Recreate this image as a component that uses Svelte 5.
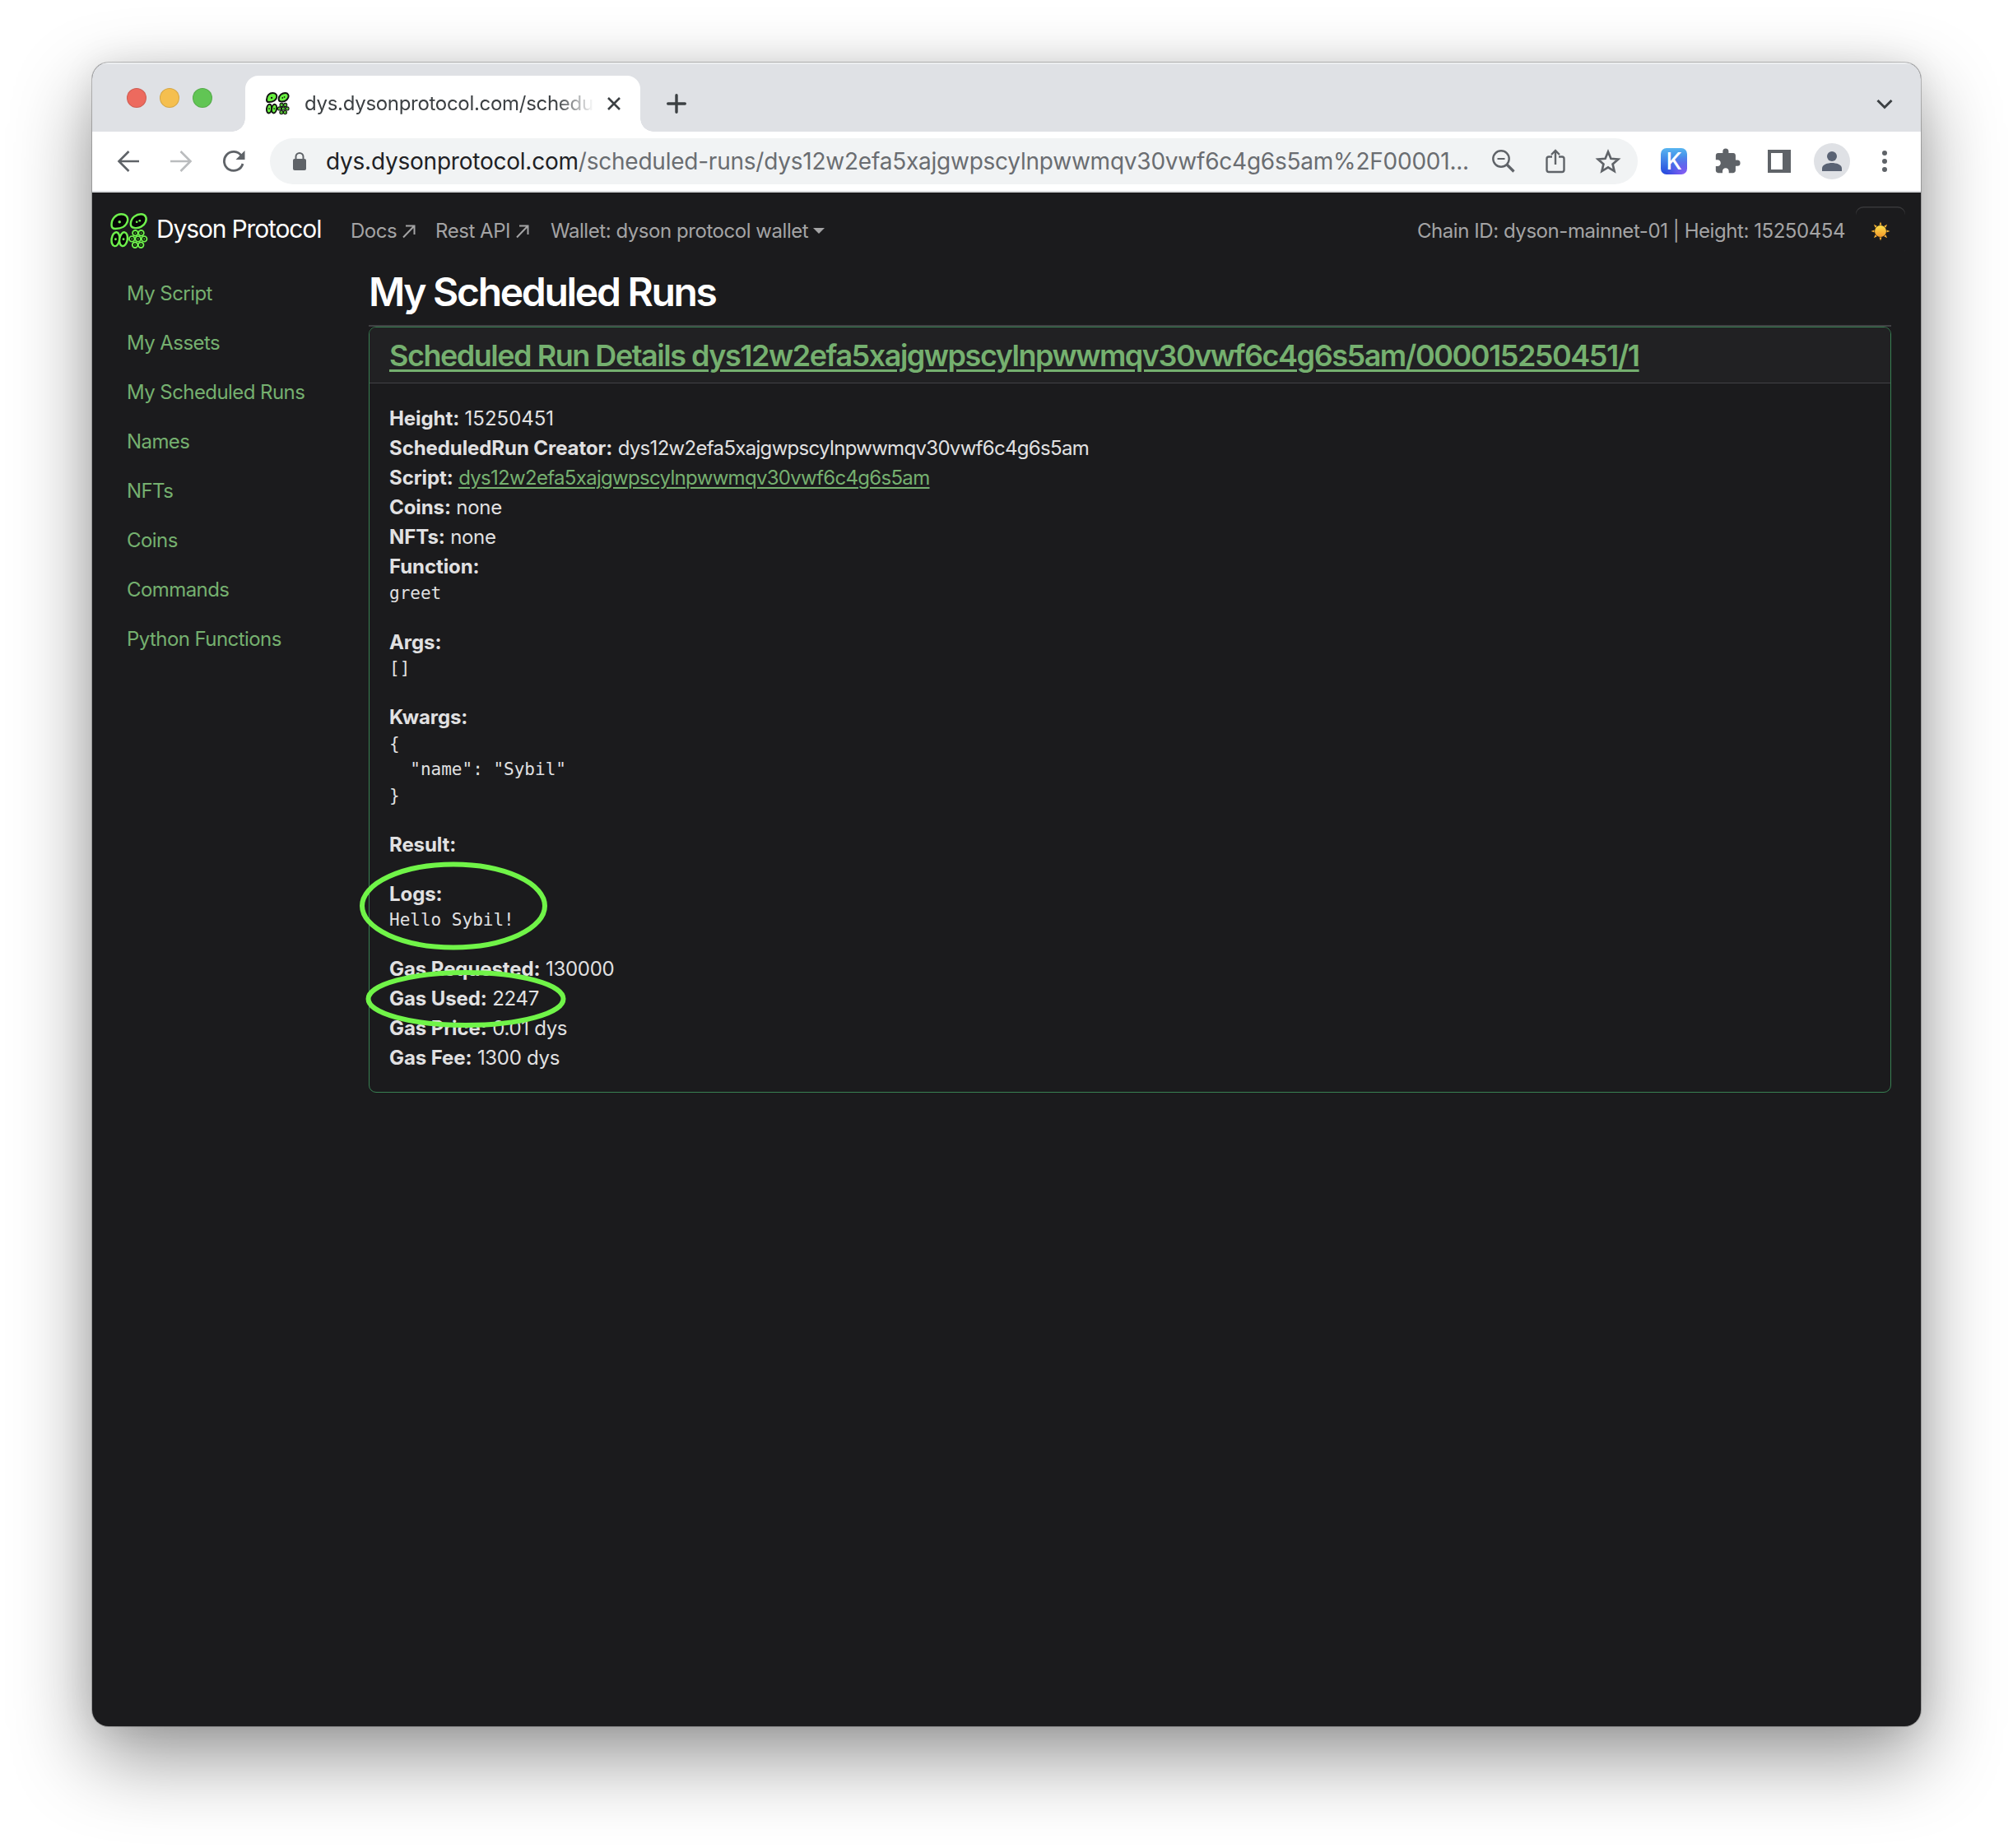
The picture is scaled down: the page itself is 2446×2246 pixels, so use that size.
<script>
  const menu = ['My Script', 'My Assets', 'My Scheduled Runs', 'Names', 'NFTs', 'Coins', 'Commands', 'Python Functions'];
  const address = 'dys12w2efa5xajgwpscylnpwwmqv30vwf6c4g6s5am';
  const kwargs = JSON.stringify({ name: 'Sybil' }, null, 2);
  const cluster = [[29.7, 23.7], [36.7, 23.7], [25.7, 30.7], [33, 30.7], [40.3, 30.7], [29.4, 37.9], [36.4, 37.9]];
</script>

{#snippet cells(stroke, fill, width, clusterWidth)}
  <g {stroke} {fill} stroke-width={width}>
    <path d="M1.500 14C1.500 6 7 1.300 13 1.300C19 1.300 21.500 5 20.500 9.500C19 15.500 13 18.500 6 18.500C3 18.500 1.500 17 1.500 14Z" />
    <path d="M24.300 12C25 5 31 1.300 36.500 1.300C42 1.300 44 6 42 10.500C40 15.500 34 18.500 28.500 17.500C25.500 17 24 15 24.300 12Z" />
    <ellipse cx="6.300" cy="31" rx="4.700" ry="8.300" transform="rotate(8 6.300 31)" />
    <ellipse cx="15.700" cy="31" rx="4.700" ry="8.300" transform="rotate(10 15.700 31)" />
    {#each cluster as [x, y]}
      <circle cx={x} cy={y} r="3.200" stroke-width={clusterWidth} />
    {/each}
  </g>
{/snippet}

{#snippet nuclei(color)}
  <g fill={color}>
    <circle cx="11" cy="10.500" r="1.700" />
    <circle cx="31.500" cy="10.500" r="1.300" />
    <circle cx="35" cy="9" r="1.300" />
    <circle cx="6.300" cy="31" r="1.400" />
    <circle cx="15.700" cy="31" r="1.400" />
    {#each cluster as [x, y]}
      <circle cx={x} cy={y} r="0.800" />
    {/each}
  </g>
{/snippet}

{#snippet outArrow()}
  <svg class="out" viewBox="0 0 16 20" fill="none" stroke="currentColor" stroke-width="2">
    <path d="M1 17.500L14 4M4 3.500H14.500V14" />
  </svg>
{/snippet}

<div class="desktop">
  <div class="window">
    <div class="tabstrip">
      <div class="lights">
        <i class="red"></i><i class="yellow"></i><i class="green"></i>
      </div>
      <div class="tab">
        <svg class="favicon" viewBox="0 0 45 43">
          {@render cells('#111', '#68f03f', 3, 1.700)}
          {@render nuclei('#111')}
        </svg>
        <span class="tab-title">dys.dysonprotocol.com/schedu</span>
        <svg class="close" viewBox="0 0 16 16" stroke="#3c4043" stroke-width="2.600"><path d="M1 1L15 15M15 1L1 15" /></svg>
      </div>
      <svg class="plus" viewBox="0 0 24 24" stroke="#3c4043" stroke-width="3.400" stroke-linecap="round"><path d="M12 1.700V22.300M1.700 12H22.300" /></svg>
      <svg class="chevron" viewBox="0 0 20 14" fill="none" stroke="#3c4043" stroke-width="3"><path d="M1.500 2L10 10.500L18.500 2" /></svg>
    </div>

    <div class="toolbar">
      <svg class="nav-icon back" viewBox="0 0 28 28" fill="none" stroke="#5f6368" stroke-width="2.600"><path d="M27 14H3M14.500 2L2.500 14L14.500 26" /></svg>
      <svg class="nav-icon forward" viewBox="0 0 28 28" fill="none" stroke="#babcbe" stroke-width="2.600"><path d="M1 14H25M13.500 2L25.500 14L13.500 26" /></svg>
      <svg class="nav-icon reload" viewBox="0 0 28 28"><path d="M23.500 7.500A11.500 11.500 0 1 0 25 17" fill="none" stroke="#5f6368" stroke-width="2.800" /><path d="M27.500 1V12H16.500Z" fill="#5f6368" /></svg>
      <div class="omnibox">
        <svg class="lock" viewBox="0 0 18 22"><rect x="1" y="8" width="16" height="14" rx="2" fill="#5f6368" /><path d="M4.500 9V5.500a4.500 4.500 0 0 1 9 0V9" fill="none" stroke="#5f6368" stroke-width="2" /></svg>
        <span class="url"><b>dys.dysonprotocol.com</b>/scheduled-runs/{address}%2F00001...</span>
        <svg class="lens" viewBox="0 0 28 28" fill="none" stroke="#5f6368"><circle cx="11" cy="11" r="9.700" stroke-width="2.400" /><path d="M6.500 11H15.500" stroke-width="2" /><path d="M17.500 17.500L26.500 26.500" stroke-width="3.200" /></svg>
        <svg class="share" viewBox="0 0 24 30" fill="none" stroke="#5f6368" stroke-width="2.400"><path d="M8 9.500H4A2.500 2.500 0 0 0 1.500 12V25.500A2.500 2.500 0 0 0 4 28H20A2.500 2.500 0 0 0 22.500 25.500V12A2.500 2.500 0 0 0 20 9.500H16M12 19V2.500M7 7L12 2L17 7" /></svg>
        <svg class="star" viewBox="0 0 30 29" fill="none" stroke="#5f6368" stroke-width="2.500"><path d="M15 3.300L18.200 11L26.500 11.700L20.200 17.200L22.100 25.300L15 21L7.900 25.300L9.800 17.200L3.500 11.700L11.800 11Z" /></svg>
      </div>
      <div class="keplr">K</div>
      <svg class="puzzle" viewBox="0 0 24 24" fill="#5f6368"><path d="M20.500 11H19V7c0-1.100-.9-2-2-2h-4V3.500a2.500 2.500 0 0 0-5 0V5H4c-1.100 0-1.990.9-1.990 2v3.800H3.500c1.490 0 2.700 1.210 2.700 2.700s-1.210 2.700-2.700 2.700H2V20c0 1.100.9 2 2 2h3.800v-1.500c0-1.490 1.210-2.700 2.700-2.700s2.700 1.210 2.700 2.700V22H17c1.100 0 2-.9 2-2v-4h1.500a2.500 2.500 0 0 0 0-5z" /></svg>
      <div class="panel-icon"></div>
      <div class="avatar"><svg viewBox="0 0 24 24" fill="#5a6374"><circle cx="12" cy="6" r="6" /><path d="M0 24V20.500C0 16 7 14 12 14S24 16 24 20.500V24Z" /></svg></div>
      <svg class="dots" viewBox="0 0 6 26" fill="#5f6368"><circle cx="3" cy="3" r="3" /><circle cx="3" cy="13" r="3" /><circle cx="3" cy="23" r="3" /></svg>
    </div>

    <div class="page">
      <nav>
        <svg class="logo" viewBox="0 0 45 43">
          {@render cells('#6ef04c', '#050505', 2.4, 1.800)}
          {@render nuclei('#6ef04c')}
        </svg>
        <span class="brand">Dyson Protocol</span>
        <span class="link docs">Docs {@render outArrow()}</span>
        <span class="link rest">Rest API {@render outArrow()}</span>
        <span class="link wallet">Wallet: dyson protocol wallet<i class="caret"></i></span>
        <span class="chain">Chain ID: dyson-mainnet-01 | Height: 15250454</span>
        <button class="theme" aria-label="Toggle theme">
          <svg viewBox="0 0 24 24">
            <defs><linearGradient id="sun" x2="0" y2="1"><stop offset="0" stop-color="#ffe04a" /><stop offset="1" stop-color="#f59a2c" /></linearGradient></defs>
            <g fill="#f9b233">
              {#each [0, 45, 90, 135, 180, 225, 270, 315] as angle}
                <path d="M10.500 4.500L12 0.500L13.500 4.500Z" transform="rotate({angle} 12 12)" />
              {/each}
            </g>
            <circle cx="12" cy="12" r="7" fill="url(#sun)" />
          </svg>
        </button>
      </nav>

      <div class="columns">
        <aside>
          {#each menu as item}<span>{item}</span>{/each}
        </aside>
        <main>
          <h2>My Scheduled Runs</h2>
          <section class="card">
            <header><span>Scheduled Run Details {address}/000015250451/1</span></header>
            <div class="body">
              <div><b>Height:</b> <span class="height">15250451</span></div>
              <div><b>ScheduledRun Creator:</b> <span class="addr">{address}</span></div>
              <div><b>Script:</b> <span class="addr green-link">{address}</span></div>
              <div><b>Coins:</b> none</div>
              <div><b>NFTs:</b> none</div>
              <div><b>Function:</b></div>
              <pre>greet</pre>
              <div><b>Args:</b></div>
              <pre>[]</pre>
              <div><b>Kwargs:</b></div>
              <pre>{kwargs}</pre>
              <div><b>Result:</b></div>
              <pre></pre>
              <div class="marked">
                <b>Logs:</b>
                <svg class="ring logs-ring" viewBox="0 0 228 108"><ellipse cx="114" cy="54" rx="111" ry="50.500" /></svg>
              </div>
              <pre>Hello Sybil!</pre>
              <div><b>Gas Requested:</b> 130000</div>
              <div class="marked">
                <b>Gas Used:</b> 2247
                <svg class="ring gas-ring" viewBox="0 0 244 70"><ellipse cx="122" cy="35" rx="118.500" ry="32" /></svg>
              </div>
              <div><b>Gas Price:</b> 0.01 dys</div>
              <div><b>Gas Fee:</b> 1300 dys</div>
            </div>
          </section>
        </main>
      </div>
    </div>
  </div>
</div>

<style>
  :global(body) { margin: 0; background: #fff; }
  * { box-sizing: border-box; }
  svg { display: block; flex: none; }
  .desktop { width: 2446px; height: 2246px; padding: 76px 112px 0; overflow: hidden; background: #fff; font-family: Inter, sans-serif; }
  .window { width: 2222px; height: 2022px; border-radius: 20px; overflow: hidden; display: flex; flex-direction: column; background: #1b1b1d; box-shadow: 0 0 0 1px rgba(0, 0, 0, .22), 0 38px 96px rgba(0, 0, 0, .42), 0 0 40px rgba(0, 0, 0, .08); }

  .tabstrip { height: 84px; flex: none; display: flex; background: #dfe1e5; box-shadow: inset 0 2px 0 #eceef0; }
  .lights { display: flex; gap: 16px; width: 186px; padding: 31px 0 0 42px; }
  .lights i { width: 24px; height: 24px; border-radius: 50%; border: 1px solid rgba(0, 0, 0, .13); }
  .red { background: #ed6a5e; }
  .yellow { background: #f5bf4f; }
  .green { background: #61c554; }
  .tab { width: 480px; height: 68px; margin-top: 16px; border-radius: 16px 16px 0 0; background: #fff; display: flex; align-items: center; padding: 0 24px 0 25px; position: relative; }
  .tab::before, .tab::after { content: ''; position: absolute; bottom: 0; width: 16px; height: 16px; }
  .tab::before { left: -16px; background: radial-gradient(circle at 0 0, transparent 15.5px, #fff 16px); }
  .tab::after { right: -16px; background: radial-gradient(circle at 100% 0, transparent 15.5px, #fff 16px); }
  .favicon { width: 29px; height: 28px; }
  .tab-title { width: 353px; margin: -2px 15px 0 18px; overflow: hidden; white-space: nowrap; font-size: 24px; letter-spacing: -.3px; color: #3c4043; mask-image: linear-gradient(90deg, #000 305px, transparent 352px); }
  .close { width: 16px; height: 16px; }
  .plus { width: 24px; height: 24px; margin: 38px 0 0 32px; }
  .chevron { width: 20px; height: 14px; margin: 44px 34px 0 auto; }

  .toolbar { height: 74px; flex: none; display: flex; align-items: center; background: #fff; border-bottom: 2px solid #dadcde; }
  .nav-icon { width: 28px; height: 28px; }
  .back { margin-left: 30px; }
  .forward { margin-left: 36px; }
  .reload { margin-left: 36px; }
  .omnibox { width: 1662px; height: 56px; margin-left: 30px; border-radius: 28px; background: #f1f3f4; display: flex; align-items: center; padding-left: 27px; }
  .lock { width: 18px; height: 22px; }
  .url { width: 1392px; margin-left: 23px; font-size: 28px; letter-spacing: -.23px; white-space: nowrap; color: #6a6d71; }
  .url b { font-weight: 400; color: #202124; }
  .lens { width: 28px; height: 28px; margin-left: 25px; }
  .share { width: 24px; height: 30px; margin-left: 37px; }
  .star { width: 32px; height: 31px; margin-left: 36px; }
  .keplr { width: 32px; height: 32px; margin-left: 28px; border-radius: 7px; background: radial-gradient(circle at 90% 100%, #8a60f5, transparent 55%), linear-gradient(#57b5f0, #2546dd); color: #fff; font: 500 28px/33px Inter, sans-serif; text-align: center; }
  .puzzle { width: 34px; height: 34px; margin-left: 32px; }
  .panel-icon { width: 28px; height: 28px; margin-left: 32px; border: 4px solid #5f6368; border-right-width: 10px; }
  .avatar { width: 44px; height: 44px; margin-left: 28px; border-radius: 50%; background: #dfe1e5; display: grid; place-items: center; }
  .avatar svg { width: 24px; height: 24px; }
  .dots { width: 6px; height: 26px; margin-left: 39px; }

  .page { flex: 1; color: #e1e1e2; font-size: 24px; line-height: 36px; }
  nav { height: 93px; display: flex; align-items: center; padding: 0 19px 0 22px; color: #a4a4a5; white-space: nowrap; }
  .logo { width: 46px; height: 44px; }
  .brand { width: 236px; margin: -5px 0 0 10px; font-size: 30px; letter-spacing: -1.15px; color: #fff; }
  .link { display: flex; align-items: center; letter-spacing: -.45px; }
  .docs { width: 103px; }
  .rest { width: 140px; }
  .out { width: 16px; height: 20px; margin-left: 7px; }
  .caret { margin-left: 6px; border: 7px solid transparent; border-top-color: currentColor; border-bottom: 0; }
  .chain { margin-left: auto; letter-spacing: -.44px; }
  .theme { width: 60px; height: 60px; margin-left: 13px; padding: 0; border: 0; border-radius: 9px; background: none; box-shadow: inset 0 1.5px 0 #39393b; display: grid; place-items: center; }
  .theme svg { width: 24px; height: 24px; }

  .columns { display: flex; }
  aside { width: 336px; padding: 12px 0 0 42px; display: flex; flex-direction: column; gap: 24px; color: #75b06f; letter-spacing: -.57px; }
  main { width: 1850px; }
  h2 { height: 70px; margin: 0; border-bottom: 2px solid #404043; font-size: 48px; line-height: 56px; font-weight: 600; letter-spacing: -2.3px; color: #fff; }
  .card { border: 1px solid #388052; border-radius: 9px; }
  header { padding: 13px 24px 0; height: 68px; border-bottom: 1px solid #424245; border-radius: 8px 8px 0 0; background: #212123; font-size: 36px; line-height: 43px; font-weight: 600; letter-spacing: -1.48px; color: #75b06f; white-space: nowrap; }
  header span { text-decoration: underline; text-decoration-thickness: 3px; text-underline-offset: 4px; }
  .body { padding: 25px 24px 23px; letter-spacing: -.3px; }
  .body b { font-weight: 700; letter-spacing: -.08px; }
  .height { letter-spacing: 0; }
  .addr { letter-spacing: -.69px; }
  .green-link { color: #75b06f; text-decoration: underline; text-decoration-thickness: 2px; text-underline-offset: 3px; }
  pre { margin: -1.5px 0 25.5px; font: 21px/31.5px 'DejaVu Sans Mono', monospace; letter-spacing: 0; }
  .marked { position: relative; }
  .ring { position: absolute; overflow: visible; fill: none; stroke: #70f448; stroke-width: 6px; }
  .logs-ring { left: -36px; top: -22px; width: 228px; height: 108px; }
  .gas-ring { left: -29px; top: -17px; width: 244px; height: 70px; }
</style>
